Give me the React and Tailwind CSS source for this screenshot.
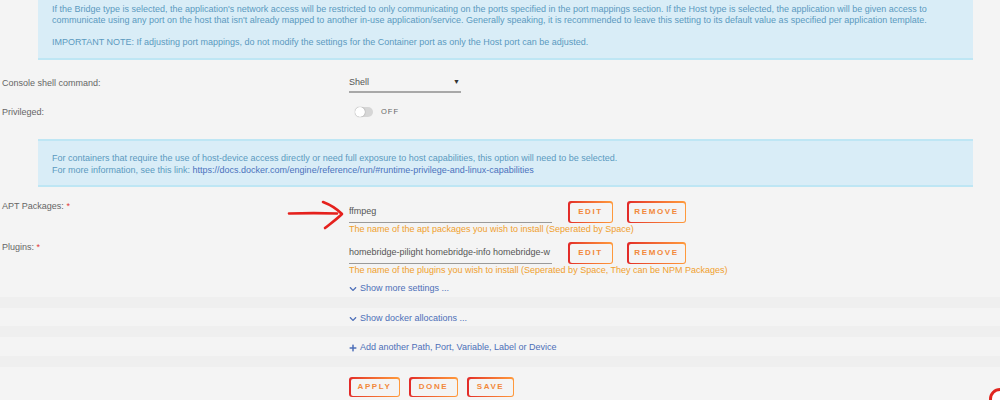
import React from 'react';
import { FaChevronDown, FaPlus } from 'react-icons/fa';

const GradientButton = ({ label, width }) => (
  <div className={`rounded-[3px] p-[1.5px] bg-linear-to-r from-[#e22828] to-[#ff9a3c] ${width}`}>
    <div className="h-full rounded-[2px] bg-[#f4f4f4] flex items-center justify-center">
      <span className="text-[8px] font-bold tracking-[1.6px] text-[#f2883a]">{label}</span>
    </div>
  </div>
);

const InfoBox = ({ children, className = '' }) => (
  <div className={`ml-[38px] w-[935px] bg-[#d9edf7] text-[#5b9ac0] leading-[11px] px-[14px] ${className}`}>
    {children}
  </div>
);

const StackRow = ({ label, value, hint, top }) => (
  <div className={`flex ${top}`}>
    <div className="w-[349px] pl-[2px] leading-[12px] text-[#666]">
      {label} <span className="text-[#e23b3b]">*</span>
    </div>
    <div className="flex flex-col">
      <div className="flex items-start">
        <div className="w-[203px] h-[22px] border-b-[1.5px] border-[#9a9a9a] flex items-center overflow-hidden whitespace-nowrap text-[#555] mt-[1px]">
          {value}
        </div>
        <div className="ml-[16px] mt-[1px] h-[22px] flex gap-[14px]">
          <GradientButton label="EDIT" width="w-[45px]" />
          <GradientButton label="REMOVE" width="w-[59px]" />
        </div>
      </div>
      <div className="leading-[12px] text-[#f0a02e]">{hint}</div>
    </div>
  </div>
);

const LinkRow = ({ icon, children, height }) => (
  <div className={`pl-[349px] flex items-center gap-[3px] text-[#4d6fb8] ${height}`}>
    {icon}
    <span>{children}</span>
  </div>
);

export default function App() {
  return (
    <div className="relative w-[1000px] h-[400px] overflow-hidden bg-[#f4f4f4] font-['Liberation_Sans',Arial,sans-serif] text-[9px]">
      {/* network type note */}
      <InfoBox className="pt-[4px] pb-[10px] border-b-2 border-[#bee6f4]">
        <p>
          If the Bridge type is selected, the application's network access will be restricted to only communicating on the ports specified in the port mappings section. If the Host type is selected, the application will be given access to communicate using any port on the host that isn't already mapped to another in-use application/service. Generally speaking, it is recommended to leave this setting to its default value as specified per application template.
        </p>
        <p className="mt-[11px]">
          IMPORTANT NOTE: If adjusting port mappings, do not modify the settings for the Container port as only the Host port can be adjusted.
        </p>
      </InfoBox>

      {/* console shell */}
      <div className="flex pt-[16px]">
        <div className="w-[349px] pl-[2px] leading-[12px] pt-[1px] text-[#666]">Console shell command:</div>
        <div className="w-[112px] h-[17px] border-b-2 border-[#a8a8a8] flex justify-between items-start text-[#555] leading-[12px]">
          <span>Shell</span>
          <span className="text-[7px] text-[#333] pr-[1px]">▼</span>
        </div>
      </div>

      {/* privileged */}
      <div className="flex pt-[13px] items-center">
        <div className="w-[355px] pl-[2px] leading-[12px] text-[#666]">Privileged:</div>
        <div className="w-[18px] h-[10px] rounded-full bg-[#d6d6d6] relative">
          <div className="absolute left-0 top-0 w-[10px] h-[10px] rounded-full bg-white shadow-[0_0_1px_rgba(0,0,0,0.5)]" />
        </div>
        <span className="ml-[8px] text-[7.5px] tracking-[1px] text-[#666]">OFF</span>
      </div>

      {/* privileged note */}
      <InfoBox className="mt-[21px] h-[48px] pt-[11px] border-y-2 border-[#bee6f4]">
        <p className="leading-[12px]">
          For containers that require the use of host-device access directly or need full exposure to host capabilities, this option will need to be selected.
        </p>
        <p className="leading-[12px]">
          For more information, see this link: <span className="text-[#4b72bd]">https://docs.docker.com/engine/reference/run/#runtime-privilege-and-linux-capabilities</span>
        </p>
      </InfoBox>

      <StackRow
        top="pt-[13px]"
        label="APT Packages:"
        value="ffmpeg"
        hint="The name of the apt packages you wish to install (Seperated by Space)"
      />
      <StackRow
        top="pt-[6px]"
        label="Plugins:"
        value="homebridge-pilight homebridge-info homebridge-w"
        hint="The name of the plugins you wish to install (Seperated by Space, They can be NPM Packages)"
      />

      <LinkRow height="h-[21px] pt-[4px]" icon={<FaChevronDown className="w-[8px] h-[8px]" />}>
        Show more settings ...
      </LinkRow>
      <div className="h-[11px] bg-[#efefef]" />
      <LinkRow height="h-[18px] pt-[3px]" icon={<FaChevronDown className="w-[8px] h-[8px]" />}>
        Show docker allocations ...
      </LinkRow>
      <div className="h-[11px] bg-[#efefef]" />
      <LinkRow height="h-[19px] pt-[3px]" icon={<FaPlus className="w-[8px] h-[8px]" />}>
        Add another Path, Port, Variable, Label or Device
      </LinkRow>
      <div className="h-[11px] bg-[#efefef]" />

      <div className="pl-[349px] mt-[10px] flex h-[20px] gap-[9px]">
        <GradientButton label="APPLY" width="w-[51px]" />
        <GradientButton label="DONE" width="w-[49px]" />
        <GradientButton label="SAVE" width="w-[47px]" />
      </div>

      {/* hand-drawn arrow pointing at the apt packages field */}
      <svg className="absolute left-[285px] top-[198px]" width="62" height="34" viewBox="0 0 62 34" fill="none">
        <path d="M4 15.5 C20 15, 38 15, 52 15.5" stroke="#e5211d" strokeWidth="2.6" strokeLinecap="round" />
        <path d="M38 4 C46 7, 52 11, 57 16 C52 21, 45 26, 40 30" stroke="#e5211d" strokeWidth="2.6" strokeLinecap="round" strokeLinejoin="round" />
      </svg>

      {/* corner badge, mostly off-screen */}
      <div className="absolute left-[989px] top-[388px] w-[22px] h-[22px] rounded-full border-[3px] border-[#e0261f] bg-white" />
    </div>
  );
}
